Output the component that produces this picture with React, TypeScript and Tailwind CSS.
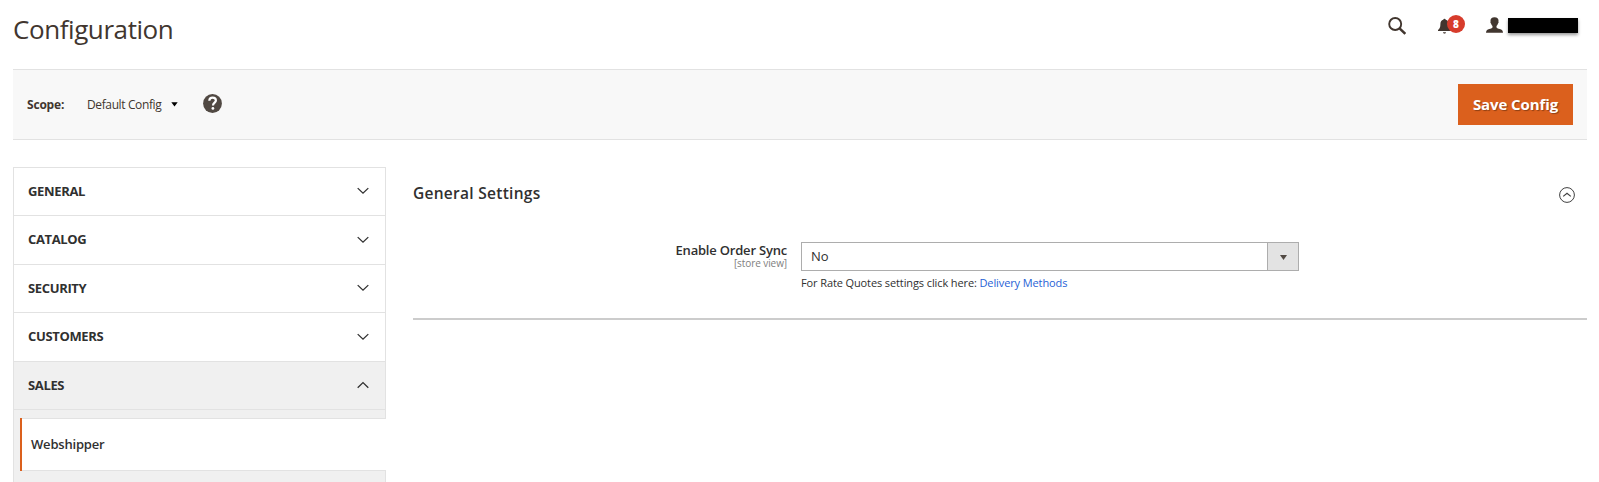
import React from "react";

type Section = { label: string; height: string; open?: boolean };

const sections: Section[] = [
  { label: "General", height: "h-12" },
  { label: "Catalog", height: "h-[49px]" },
  { label: "Security", height: "h-12" },
  { label: "Customers", height: "h-[49px]" },
  { label: "Sales", height: "h-12", open: true },
];

function Chevron({ up = false }: { up?: boolean }) {
  return (
    <svg className="mb-px h-2 w-3" viewBox="0 0 12 8" fill="none" stroke="#303030" strokeWidth="1.3">
      <path d={up ? "M.7 6.7 6 1.6l5.3 5.1" : "M.7 1.1 6 6.2l5.3-5.1"} />
    </svg>
  );
}

function Header() {
  return (
    <header className="flex h-[69px] items-start">
      <h1 className="mt-[9px] text-[26px] leading-10 tracking-[-0.42px] text-[#41362f]">Configuration</h1>
      <div className="ml-auto flex items-start pr-[9px]">
        <svg className="mt-[17px] h-[18px] w-[18px]" viewBox="0 0 18 18" fill="none" stroke="#41362f">
          <circle cx="7.2" cy="7" r="6" strokeWidth="1.9" />
          <path d="m11.3 11.1 6 5.8" strokeWidth="2.5" />
        </svg>
        <div className="relative mt-[18px] ml-8 h-4 w-[13px]">
          <svg className="h-4 w-[13px]" viewBox="0 0 13 16" fill="#41362f">
            <path d="M6.5.8c.7 0 1.1.4 1.2 1 1.9.5 2.9 2 2.9 4.2 0 3.5.8 4.7 2.4 6.1V13H0v-.9C1.6 10.7 2.4 9.5 2.4 6c0-2.2 1-3.7 2.9-4.2.1-.6.5-1 1.2-1Z" />
            <path d="M5 14h3c-.1 1.1-.7 1.8-1.5 1.8S5.1 15.1 5 14Z" opacity=".75" />
          </svg>
          <span className="absolute top-[-3px] left-[9px] flex h-[18px] w-[18px] items-center justify-center rounded-full bg-[#d73c2c] text-[10px] leading-none font-extrabold text-white">
            8
          </span>
        </div>
        <svg className="mt-[17px] ml-[35px] h-4 w-[17px]" viewBox="0 0 17 16" fill="#41362f">
          <path d="M8.5.3c2.8 0 4 1.3 4 3.3 0 .4 0 .7-.1 1 .4.5.2 1.5-.4 1.9-.3 1.2-.9 2-1.5 2.6v1.3c.7.9 1.7 1.2 3.2 1.6 2.2.6 3.3 1.7 3.3 3.8H0c0-2.1 1.1-3.2 3.3-3.8 1.5-.4 2.5-.7 3.2-1.6V9.1C5.9 8.5 5.3 7.7 5 6.5c-.6-.4-.8-1.4-.4-1.9-.1-.3-.1-.6-.1-1C4.5 1.6 5.7.3 8.5.3Z" />
        </svg>
        <div className="mt-[18px] ml-[5px] h-[15px] w-[70px] bg-black shadow-[0_2px_3px_rgba(0,0,0,0.4)]" />
      </div>
    </header>
  );
}

function ScopeBar() {
  return (
    <div className="flex h-[71px] items-center border-y border-[#e2e2e2] bg-[#f8f8f8] px-[14px] text-[#41362f]">
      <span className="w-[60px] text-xs font-bold tracking-[-0.2px]">Scope:</span>
      <span className="w-[84px] text-xs tracking-[-0.38px] whitespace-nowrap">Default Config</span>
      <svg className="h-[5px] w-[7px]" viewBox="0 0 7 5">
        <path d="M.3.3h6.4L3.5 4.5Z" fill="#000" />
      </svg>
      <svg className="mb-[3px] ml-[25px] h-[19px] w-[19px]" viewBox="0 0 19 19">
        <circle cx="9.5" cy="9.5" r="9.4" fill="#514943" />
        <path d="M6.3 6.7c.1-1.9 1.3-3 3.3-3s3.3 1.1 3.3 2.7c0 2.2-2.9 2.2-2.9 5.1" fill="none" stroke="#fff" strokeWidth="2.2" />
        <circle cx="9.9" cy="14.4" r="1.4" fill="#fff" />
      </svg>
      <button className="ml-auto h-[41px] w-[115px] bg-[#db601d] text-[15px] font-bold tracking-[-0.1px] whitespace-nowrap text-white [text-shadow:1px_1px_1px_rgba(0,0,0,0.35)]">
        Save Config
      </button>
    </div>
  );
}

function Sidebar() {
  return (
    <nav className="w-[373px] shrink-0 border-t border-l border-[#e2e2e2] text-[#303030]">
      {sections.map((s) => (
        <div
          key={s.label}
          className={`${s.height} ${s.open ? "bg-[#f0f0f0]" : "bg-white"} flex items-center justify-between border-r border-b border-[#e2e2e2] pr-4 pl-[14px]`}
        >
          <span className="text-[13px] font-bold tracking-[-0.35px] uppercase">{s.label}</span>
          <Chevron up={s.open} />
        </div>
      ))}
      <div className="h-[8px] border-r border-[#e2e2e2] bg-[#f0f0f0]" />
      <div className="flex bg-[#f0f0f0] pl-[6px]">
        <a className="flex h-[53px] grow items-center border-y border-[#e2e2e2] bg-white text-[13px] font-semibold tracking-[-0.2px]">
          <span className="-my-px mr-[9px] h-[53px] w-[2px] bg-[#db601d]" />
          Webshipper
        </a>
      </div>
      <div className="h-[11px] border-r border-[#e2e2e2] bg-[#f0f0f0]" />
    </nav>
  );
}

function Settings() {
  return (
    <main className="grow">
      <div className="flex h-[52px] items-center justify-between pr-3">
        <h2 className="mt-[2px] text-[15.5px] font-semibold tracking-[0.28px] text-[#303030]">General Settings</h2>
        <svg className="mt-[3px] h-4 w-4" viewBox="0 0 16 16" fill="none" stroke="#404040">
          <circle cx="8" cy="8" r="7.4" />
          <path d="M4.2 9.4 8 6.2l3.8 3.2" strokeWidth="1.2" />
        </svg>
      </div>
      <div className="flex h-[101px] border-b-2 border-[#ccc] pt-[23px]">
        <div className="flex w-[374px] flex-col items-end text-[#303030]">
          <label className="mt-[1px] text-[13px] leading-[15px] font-semibold tracking-[-0.2px]">Enable Order Sync</label>
          <span className="-mt-px text-[10px] leading-3 tracking-[-0.08px] text-[#808080]">[store view]</span>
        </div>
        <div className="ml-[14px] w-[498px]">
          <div className="flex h-[29px] border border-[#adadad] bg-white">
            <span className="grow pl-[9px] text-[13px] leading-[27px] text-[#303030]">No</span>
            <span className="flex w-[31px] items-center justify-center border-l border-[#adadad] bg-[#e3e3e3]">
              <svg className="mt-[2px] h-[5px] w-[7px]" viewBox="0 0 7 5">
                <path d="M0 0h7L3.5 5Z" fill="#514943" />
              </svg>
            </span>
          </div>
          <p className="mt-[4px] text-[11px] leading-4 tracking-[-0.11px] text-[#303030]">
            For Rate Quotes settings click here: <a className="text-[#1f62d6]">Delivery Methods</a>
          </p>
        </div>
      </div>
    </main>
  );
}

export default function App() {
  return (
    <div className="h-[482px] overflow-hidden bg-white pr-3 pl-[13px] font-['Open_Sans',sans-serif]">
      <Header />
      <ScopeBar />
      <div className="mt-[27px] flex gap-[27px]">
        <Sidebar />
        <Settings />
      </div>
    </div>
  );
}
